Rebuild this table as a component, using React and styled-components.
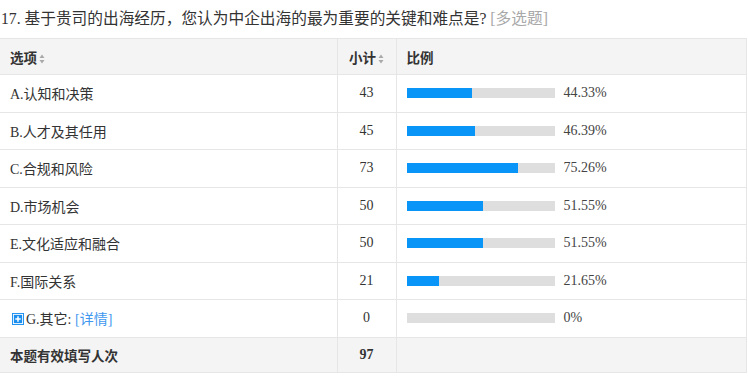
import styled, { createGlobalStyle } from "styled-components";

const GlobalStyle = createGlobalStyle`
    body {
        margin: 0;
        background: #ffffff;
        font-family: "Liberation Serif", "Noto Sans CJK SC", serif;
        color: #333333;
    }
`;

const options = [
    { label: "A.认知和决策", count: 43, pct: 44.33 },
    { label: "B.人才及其任用", count: 45, pct: 46.39 },
    { label: "C.合规和风险", count: 73, pct: 75.26 },
    { label: "D.市场机会", count: 50, pct: 51.55 },
    { label: "E.文化适应和融合", count: 50, pct: 51.55 },
    { label: "F.国际关系", count: 21, pct: 21.65 },
];

function SortIcon() {
    return (
        <Sort width="6" height="10" viewBox="0 0 6 10">
            <path d="M3 0.5 L5.5 4 L0.5 4 Z" fill="#a9a9a9" />
            <path d="M3 9.5 L5.5 6 L0.5 6 Z" fill="#a9a9a9" />
        </Sort>
    );
}

function PlusIcon() {
    return (
        <Plus width="12" height="12" viewBox="0 0 12 12">
            <rect x="0" y="0" width="12" height="12" fill="#1b8ff0" />
            <rect x="1.4" y="1.4" width="9.2" height="9.2" fill="none" stroke="#ffffff" strokeWidth="0.9" />
            <path d="M6 3.3 V8.7 M3.3 6 H8.7" stroke="#ffffff" strokeWidth="1.5" />
        </Plus>
    );
}

function Bar({ pct }) {
    return (
        <BarTrack>
            <BarFill style={{ width: `${pct}%` }} />
        </BarTrack>
    );
}

function App() {
    return (
        <Page>
            <GlobalStyle />
            <Title>
                17. 基于贵司的出海经历，您认为中企出海的最为重要的关键和难点是? <Tag>[多选题]</Tag>
            </Title>
            <Table>
                <colgroup>
                    <col style={{ width: "337px" }} />
                    <col style={{ width: "59px" }} />
                    <col />
                </colgroup>
                <thead>
                    <HeadRow>
                        <HeadCell>选项<SortIcon /></HeadCell>
                        <HeadCell $center>小计<SortIcon /></HeadCell>
                        <HeadCell>比例</HeadCell>
                    </HeadRow>
                </thead>
                <tbody>
                    {options.map(o => (
                        <Row key={o.label}>
                            <Cell>{o.label}</Cell>
                            <Cell $center>{o.count}</Cell>
                            <Cell>
                                <Ratio>
                                    <Bar pct={o.pct} />
                                    <Pct>{o.pct.toFixed(2)}%</Pct>
                                </Ratio>
                            </Cell>
                        </Row>
                    ))}
                    <Row>
                        <Cell $icon>
                            <PlusIcon />G.其它: <Detail>[详情]</Detail>
                        </Cell>
                        <Cell $center>0</Cell>
                        <Cell>
                            <Ratio>
                                <Bar pct={0} />
                                <Pct>0%</Pct>
                            </Ratio>
                        </Cell>
                    </Row>
                    <TotalRow>
                        <TotalCell>本题有效填写人次</TotalCell>
                        <TotalCell $center>97</TotalCell>
                        <TotalCell></TotalCell>
                    </TotalRow>
                </tbody>
            </Table>
        </Page>
    );
}

const Page = styled.div`
    width: 748px;
    height: 377px;
    overflow: hidden;
`;

const Title = styled.div`
    height: 38px;
    line-height: 37px;
    padding-left: 1px;
    font-size: 15.7px;
    color: #333333;
    white-space: nowrap;
`;

const Tag = styled.span`
    color: #a8a8a8;
`;

const Table = styled.table`
    width: 747px;
    border-collapse: collapse;
    table-layout: fixed;
    font-size: 14px;
`;

const HeadRow = styled.tr`
    height: 36px;
    background: #f4f4f4;
`;

const HeadCell = styled.th`
    padding: 0 0 0 10px;
    text-align: ${p => (p.$center ? "center" : "left")};
    ${p => p.$center && "padding: 0;"}
    font-family: "Noto Sans CJK SC", sans-serif;
    font-weight: 700;
    font-size: 13.5px;
    color: #333333;
    border: 1px solid #e6e6e6;
    &:first-child {
        border-left: none;
    }
`;

const Sort = styled.svg`
    margin-left: 2px;
    vertical-align: -1px;
`;

const Row = styled.tr`
    height: 37.5px;
`;

const Cell = styled.td`
    padding: 0 0 0 ${p => (p.$icon ? "12px" : "10px")};
    text-align: ${p => (p.$center ? "center" : "left")};
    ${p => p.$center && "padding: 0;"}
    border: 1px solid #e6e6e6;
    color: #333333;
    white-space: nowrap;
    &:first-child {
        border-left: none;
    }
`;

const TotalRow = styled.tr`
    height: 35px;
    background: #f4f4f4;
`;

const TotalCell = styled(Cell)`
    font-weight: 700;
    font-family: "Noto Sans CJK SC", sans-serif;
    font-size: 13.5px;
    ${p => p.$center && `font-family: "Liberation Serif", serif; font-size: 14px;`}
`;

const Ratio = styled.div`
    display: flex;
    align-items: center;
`;

const BarTrack = styled.div`
    width: 148px;
    height: 10px;
    background: #dedede;
`;

const BarFill = styled.div`
    height: 100%;
    background: #0994f7;
`;

const Pct = styled.span`
    margin-left: 9px;
    font-size: 14px;
    color: #444444;
`;

const Plus = styled.svg`
    margin-right: 2px;
    vertical-align: -1px;
`;

const Detail = styled.span`
    color: #3f98ef;
`;

export default App;
